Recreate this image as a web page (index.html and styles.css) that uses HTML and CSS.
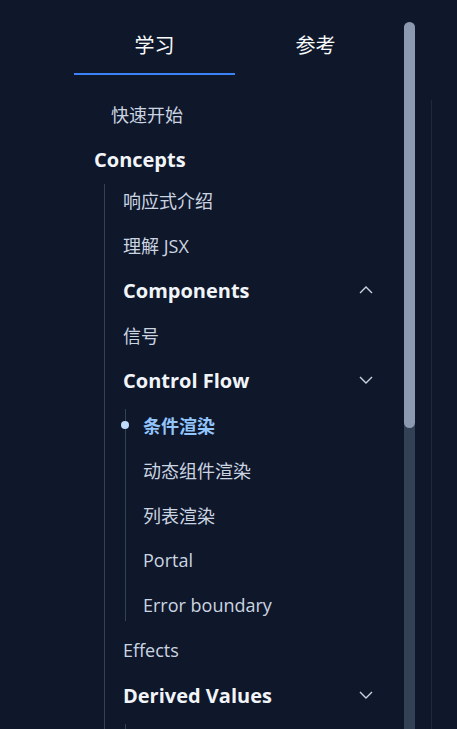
FILE: index.html
```html
<!DOCTYPE html>
<html lang="zh-CN">
<head>
<meta charset="utf-8">
<title>Docs sidebar</title>
<link rel="stylesheet" href="styles.css">
</head>
<body>
<div class="page">
  <aside class="sidebar">
    <div class="tabs">
      <div class="tab tab-active">学习</div>
      <div class="tab">参考</div>
    </div>
    <nav class="nav">
      <a class="link top">快速开始</a>
      <div class="group">
        <div class="heading">Concepts</div>
        <ul class="list">
          <li class="item">响应式介绍</li>
          <li class="item">理解 JSX</li>
          <li class="item head">Components
            <svg class="chev" width="14" height="8" viewBox="0 0 14 8"><polyline points="1,7 7,1 13,7" fill="none" stroke="currentColor" stroke-width="1.4"/></svg>
          </li>
          <li class="item">信号</li>
          <li class="item head">Control Flow
            <svg class="chev" width="14" height="8" viewBox="0 0 14 8"><polyline points="1,1 7,7 13,1" fill="none" stroke="currentColor" stroke-width="1.4"/></svg>
          </li>
          <li>
            <ul class="list sub">
              <li class="item active">条件渲染</li>
              <li class="item">动态组件渲染</li>
              <li class="item">列表渲染</li>
              <li class="item">Portal</li>
              <li class="item">Error boundary</li>
            </ul>
          </li>
          <li class="item">Effects</li>
          <li class="item head">Derived Values
            <svg class="chev" width="14" height="8" viewBox="0 0 14 8"><polyline points="1,1 7,7 13,1" fill="none" stroke="currentColor" stroke-width="1.4"/></svg>
          </li>
          <li>
            <ul class="list sub">
              <li class="spacer"></li>
            </ul>
          </li>
        </ul>
      </div>
    </nav>
  </aside>
  <div class="scrollbar"><div class="thumb"></div></div>
  <div class="divider"></div>
</div>
</body>
</html>
```

FILE: styles.css
```css
html, body {
  margin: 0;
  padding: 0;
  height: 100%;
  overflow: hidden;
  background: #0f172a;
}
body {
  font-family: "Open Sans", "Noto Sans CJK SC", sans-serif;
  color: #cbd5e1;
}
.page {
  display: flex;
  height: 100%;
}
.sidebar {
  margin-left: 74px;
  width: 322px;
  flex: none;
}
.tabs {
  display: flex;
  margin-top: 20px;
}
.tab {
  flex: 1;
  text-align: center;
  font-size: 20px;
  line-height: 28px;
  padding: 12px 0 13px;
  color: #f8fafc;
  border-bottom: 2px solid transparent;
}
.tab-active {
  border-bottom-color: #3b82f6;
}
.nav {
  display: flex;
  flex-direction: column;
  gap: 13px;
  margin-top: 23px;
}
.link, .item, .heading {
  display: flex;
  align-items: center;
  justify-content: space-between;
  height: 32px;
  font-size: 18px;
}
.top {
  padding-left: 37px;
}
.heading {
  padding-left: 20px;
  font-weight: 700;
  font-size: 20px;
  color: #f1f5f9;
}
.list {
  list-style: none;
  margin: 9px 0 0 30px;
  padding: 0 23px 0 18px;
  border-left: 1px solid #334155;
  display: flex;
  flex-direction: column;
  gap: 13px;
}
.list.sub {
  margin: 0 0 0 2px;
  padding: 0 0 0 17px;
}
.spacer {
  height: 32px;
}
.head {
  font-weight: 700;
  font-size: 20px;
  color: #f1f5f9;
}
.chev {
  color: #cbd5e1;
  flex: none;
}
.active {
  position: relative;
  color: #93c5fd;
  font-weight: 700;
}
.active::before {
  content: "";
  position: absolute;
  left: -22px;
  top: 12px;
  width: 8px;
  height: 8px;
  border-radius: 50%;
  background: #bfdbfe;
}
.scrollbar {
  flex: none;
  width: 11px;
  margin-left: 8px;
  margin-top: 22px;
  background: #334155;
  border-radius: 6px 6px 0 0;
}
.thumb {
  height: 406px;
  border-radius: 6px;
  background: #8b9ab0;
}
.divider {
  flex: none;
  width: 1px;
  margin-left: 16px;
  margin-top: 100px;
  background: #1e293b;
}
```
